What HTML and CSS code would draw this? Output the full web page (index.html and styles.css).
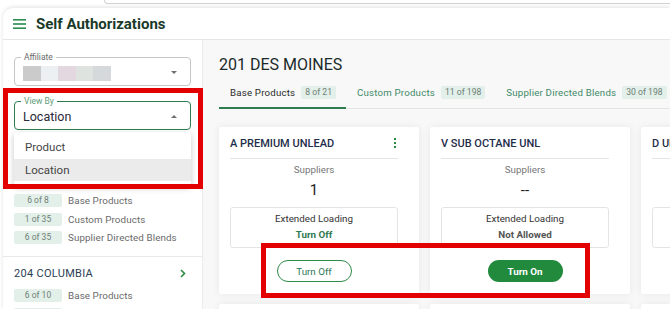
FILE: index.html
```html
<!DOCTYPE html>
<html lang="en">
<head>
    <meta charset="UTF-8">
    <meta name="viewport" content="width=device-width, initial-scale=1.0">
    <title>Self Authorizations</title>
    <link rel="stylesheet" href="styles.css">
</head>
<body>
    <div class="topbar"></div>
    <div class="app">
        <header class="app-header">
            <svg class="menu-icon" width="13" height="10" viewBox="0 0 13 10">
                <rect x="0" y="0" width="13" height="1.6" fill="#2e8b4f"/>
                <rect x="0" y="4.2" width="13" height="1.6" fill="#2e8b4f"/>
                <rect x="0" y="8.4" width="13" height="1.6" fill="#2e8b4f"/>
            </svg>
            <h1>Self Authorizations</h1>
        </header>

        <div class="layout">
            <aside class="sidebar">
                <div class="filters">
                    <div class="field">
                        <span class="field-label">Affiliate</span>
                        <div class="blurred">
                            <span class="b1"></span><span class="b2"></span><span class="b3"></span><span class="b4"></span><span class="b5"></span>
                        </div>
                        <span class="caret"></span>
                    </div>
                    <div class="field active">
                        <span class="field-label">View By</span>
                        <span class="field-value">Location</span>
                        <span class="caret up"></span>
                        <ul class="options">
                            <li>Product</li>
                            <li class="selected">Location</li>
                        </ul>
                    </div>
                </div>

                <div class="location first">
                    <div class="location-title">201 DES MOINES</div>
                    <div class="count-row"><span class="chip">6 of 8</span><span class="count-label">Base Products</span></div>
                    <div class="count-row"><span class="chip">1 of 35</span><span class="count-label">Custom Products</span></div>
                    <div class="count-row"><span class="chip">6 of 35</span><span class="count-label">Supplier Directed Blends</span></div>
                </div>
                <div class="location">
                    <div class="location-title">204 COLUMBIA
                        <svg width="6" height="9" viewBox="0 0 6 9"><polyline points="1,1 4.5,4.5 1,8" fill="none" stroke="#2e8b3e" stroke-width="1.6"/></svg>
                    </div>
                    <div class="count-row"><span class="chip">6 of 10</span><span class="count-label">Base Products</span></div>
                    <div class="count-row"><span class="chip">2 of 35</span><span class="count-label">Custom Products</span></div>
                </div>
            </aside>

            <main class="content">
                <h2 class="page-title">201 DES MOINES</h2>
                <nav class="tabs">
                    <div class="tab active">Base Products <span class="tab-chip">8 of 21</span></div>
                    <div class="tab">Custom Products <span class="tab-chip">11 of 198</span></div>
                    <div class="tab">Supplier Directed Blends <span class="tab-chip">30 of 198</span></div>
                </nav>

                <div class="cards">
                    <div class="card">
                        <div class="card-head">
                            <span class="card-title">A PREMIUM UNLEAD</span>
                            <span class="kebab"><i></i><i></i><i></i></span>
                        </div>
                        <div class="suppliers">Suppliers</div>
                        <div class="supplier-count">1</div>
                        <div class="ext-box">
                            <div>Extended Loading</div>
                            <div class="ext-state on">Turn Off</div>
                        </div>
                        <button class="btn btn-outline">Turn Off</button>
                    </div>
                    <div class="card">
                        <div class="card-head">
                            <span class="card-title">V SUB OCTANE UNL</span>
                        </div>
                        <div class="suppliers">Suppliers</div>
                        <div class="supplier-count">--</div>
                        <div class="ext-box">
                            <div>Extended Loading</div>
                            <div class="ext-state">Not Allowed</div>
                        </div>
                        <button class="btn btn-fill">Turn On</button>
                    </div>
                    <div class="card">
                        <div class="card-head">
                            <span class="card-title">D UNLEADED</span>
                        </div>
                        <div class="suppliers">Suppliers</div>
                        <div class="supplier-count">2</div>
                        <div class="ext-box">
                            <div>Extended Loading</div>
                            <div class="ext-state on">Turn Off</div>
                        </div>
                        <button class="btn btn-outline">Turn Off</button>
                    </div>
                    <div class="card"><div class="card-head"><span class="card-title">E DIESEL</span></div></div>
                    <div class="card"><div class="card-head"><span class="card-title">F DIESEL</span></div></div>
                    <div class="card"><div class="card-head"><span class="card-title">G KEROSENE</span></div></div>
                </div>
            </main>
        </div>
    </div>

    <div class="mark mark-filter"></div>
    <div class="mark mark-buttons"></div>
</body>
</html>
```

FILE: styles.css
```css
* {
    box-sizing: border-box;
}
body {
    margin: 0;
    font-family: Roboto, "Liberation Sans", sans-serif;
    background-color: #ffffff;
    height: 309px;
    overflow: hidden;
}
.topbar {
    height: 4px;
    margin-left: 104px;
    border-left: 1px solid #d2d2d2;
    border-bottom: 1px solid #d2d2d2;
    border-bottom-left-radius: 12px;
}
.app {
    margin-top: 4px;
    margin-left: 3px;
    height: 301px;
    background-color: #ffffff;
    border-radius: 10px 0 0 0;
    box-shadow: 0 -1px 4px rgba(0, 0, 0, 0.12);
    overflow: hidden;
}
.app-header {
    height: 32px;
    display: flex;
    align-items: center;
    padding-left: 10px;
    border-bottom: 1px solid #e6e6e6;
}
.menu-icon {
    margin-right: 10px;
    margin-top: 1px;
}
.app-header h1 {
    margin: 0;
    font-size: 15px;
    font-weight: 700;
    color: #1a3a2a;
}
.layout {
    display: flex;
    height: 269px;
}

/* sidebar */
.sidebar {
    width: 200px;
    flex-shrink: 0;
    border-right: 1px solid #ececec;
    background-color: #ffffff;
}
.filters {
    padding: 17px 11px 0;
    display: flex;
    flex-direction: column;
    gap: 15px;
}
.field {
    position: relative;
    height: 29px;
    border: 1px solid #c6c6c6;
    border-radius: 4px;
    display: flex;
    align-items: center;
    padding-left: 8px;
}
.field.active {
    border-color: #2e7d4f;
}
.field-label {
    position: absolute;
    top: -6px;
    left: 6px;
    padding: 0 3px;
    background-color: #ffffff;
    font-size: 8.5px;
    line-height: 10px;
    color: #6a6a6a;
}
.field.active .field-label {
    color: #5e9c78;
}
.field-value {
    font-size: 12.5px;
    color: #2a2a3a;
    margin-top: 1px;
}
.blurred {
    display: flex;
    margin-top: 3px;
}
.blurred span {
    width: 17.5px;
    height: 15px;
}
.b1 { background-color: #cbcbcb; }
.b2 { background-color: #edf0f3; }
.b3 { background-color: #e3d7e0; }
.b4 { background-color: #dfe3df; }
.b5 { background-color: #d6d9dc; }
.caret {
    position: absolute;
    right: 13px;
    top: 13px;
    width: 0;
    height: 0;
    border-left: 3px solid transparent;
    border-right: 3px solid transparent;
    border-top: 3px solid #707070;
}
.caret.up {
    border-top: none;
    border-bottom: 3px solid #707070;
}
.options {
    position: absolute;
    top: 30px;
    left: -1px;
    right: -1px;
    margin: 0;
    padding: 4px 0 5px;
    list-style: none;
    background-color: #ffffff;
    border-radius: 4px;
    box-shadow: 0 2px 6px rgba(0, 0, 0, 0.22);
    z-index: 5;
}
.options li {
    height: 22.5px;
    line-height: 22.5px;
    padding-left: 11px;
    font-size: 11.5px;
    color: #454545;
}
.options li.selected {
    background-color: #ebebeb;
}
.location {
    padding: 8px 11px 12px;
    border-top: 1px solid #e9e9e9;
}
.location.first {
    margin-top: 24px;
    border-top: none;
}
.location-title {
    height: 16px;
    margin-bottom: 8px;
    display: flex;
    align-items: center;
    justify-content: space-between;
    padding-right: 5px;
    font-size: 11px;
    letter-spacing: 0.3px;
    color: #2c3e55;
}
.location.first .location-title {
    margin-bottom: 16px;
}
.count-row {
    display: flex;
    align-items: center;
    margin-bottom: 5.5px;
}
.count-row:last-child {
    margin-bottom: 0;
}
.chip {
    width: 48px;
    height: 13px;
    line-height: 13px;
    text-align: center;
    background-color: #e3efe9;
    border-radius: 2px;
    font-size: 8.5px;
    color: #6e7f76;
}
.count-label {
    margin-left: 6px;
    font-size: 9.8px;
    color: #6a6a6a;
    letter-spacing: 0.1px;
}

/* main content */
.content {
    flex: 1;
    background-color: #f8f8f8;
    padding-left: 16px;
    overflow: hidden;
}
.page-title {
    margin: 15px 0 0;
    font-size: 16px;
    line-height: 20px;
    font-weight: 400;
    color: #1b2a2a;
}
.tabs {
    display: flex;
    margin-top: 5px;
    height: 29px;
    border-bottom: 1px solid #e4e4e4;
    white-space: nowrap;
}
.tab {
    height: 29px;
    display: flex;
    align-items: center;
    padding: 0 10px 3px 11px;
    font-size: 9.7px;
    letter-spacing: 0.2px;
    color: #3f8a68;
    border-bottom: 2px solid transparent;
}
.tab.active {
    color: #2b2b2b;
    border-bottom-color: #2e7d4f;
}
.tab-chip {
    margin-left: 6px;
    height: 13px;
    line-height: 13px;
    padding: 0 4px;
    background-color: #e3efe9;
    border-radius: 2px;
    font-size: 8.6px;
    letter-spacing: 0;
    color: #6e7f76;
}
.cards {
    display: grid;
    grid-template-columns: repeat(3, 200px);
    column-gap: 11px;
    row-gap: 10px;
    margin-top: 18px;
}
.card {
    background-color: #ffffff;
    border-radius: 2px;
    box-shadow: 0 0 8px rgba(0, 0, 0, 0.07);
    padding: 9px 21px 12px 11px;
    text-align: center;
}
.card-head {
    height: 23px;
    padding-bottom: 8px;
    border-bottom: 1px solid #e5e5e5;
    display: flex;
    justify-content: space-between;
    align-items: center;
    white-space: nowrap;
}
.card-title {
    font-size: 11px;
    font-weight: 500;
    color: #1e2d4a;
}
.kebab {
    display: flex;
    flex-direction: column;
    gap: 2px;
    margin-right: 2px;
}
.kebab i {
    width: 2px;
    height: 2px;
    background-color: #2e8b3e;
}
.suppliers {
    margin-top: 5px;
    font-size: 9.8px;
    line-height: 12px;
    color: #777777;
}
.supplier-count {
    margin-top: 5px;
    font-size: 15px;
    line-height: 18px;
    color: #222222;
}
.ext-box {
    margin-top: 8px;
    height: 41px;
    border: 1px solid #e4e4e4;
    border-radius: 3px;
    padding-top: 5px;
    font-size: 9.8px;
    line-height: 12px;
    color: #333333;
}
.ext-state {
    margin-top: 4px;
    font-weight: 700;
    color: #555555;
}
.ext-state.on {
    color: #2f7a4f;
}
.btn {
    display: block;
    margin: 12px auto 0;
    width: 75px;
    height: 22px;
    border-radius: 11px;
    font-family: Roboto, "Liberation Sans", sans-serif;
    font-size: 9.8px;
    cursor: pointer;
}
.btn-outline {
    background-color: #ffffff;
    border: 1px solid #2e8b4a;
    color: #2f7a5a;
}
.btn-fill {
    background-color: #218a3c;
    border: none;
    color: #ffffff;
    font-weight: 700;
}

/* red annotation frames */
.mark {
    position: absolute;
    border: 5px solid #e30000;
    z-index: 10;
}
.mark-filter {
    left: 3px;
    top: 88px;
    width: 200px;
    height: 101px;
}
.mark-buttons {
    left: 261px;
    top: 243px;
    width: 329px;
    height: 55px;
}
```
